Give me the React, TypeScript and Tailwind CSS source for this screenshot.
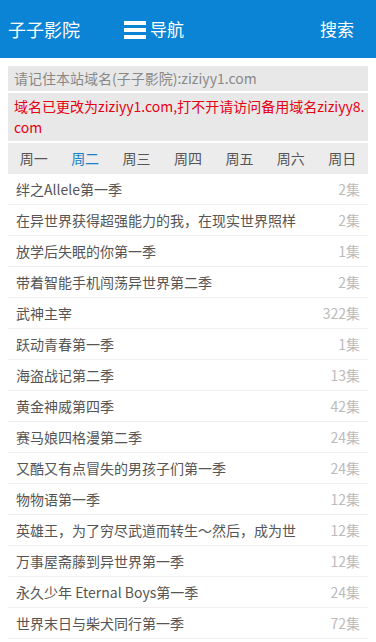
const days = ['周一', '周二', '周三', '周四', '周五', '周六', '周日']

const shows: { title: string; count: string }[] = [
  { title: '绊之Allele第一季', count: '2集' },
  { title: '在异世界获得超强能力的我，在现实世界照样', count: '2集' },
  { title: '放学后失眠的你第一季', count: '1集' },
  { title: '带着智能手机闯荡异世界第二季', count: '2集' },
  { title: '武神主宰', count: '322集' },
  { title: '跃动青春第一季', count: '1集' },
  { title: '海盗战记第二季', count: '13集' },
  { title: '黄金神威第四季', count: '42集' },
  { title: '赛马娘四格漫第二季', count: '24集' },
  { title: '又酷又有点冒失的男孩子们第一季', count: '24集' },
  { title: '物物语第一季', count: '12集' },
  { title: '英雄王，为了穷尽武道而转生～然后，成为世', count: '12集' },
  { title: '万事屋斋藤到异世界第一季', count: '12集' },
  { title: '永久少年 Eternal Boys第一季', count: '24集' },
  { title: '世界末日与柴犬同行第一季', count: '72集' },
]

const App = () => {
  const active = 1

  return (
    <div className="min-h-[642px] bg-white font-['Noto_Sans_CJK_SC','Noto_Sans',sans-serif]">
      {/* top bar */}
      <header className="flex h-[58px] items-center bg-[#0b84d5] px-2 text-white">
        <div className="w-[116px] text-[18px]">子子影院</div>
        <div className="flex items-center gap-1 text-[17px]">
          <svg width="22" height="20" viewBox="0 0 22 20" className="mt-[1px]">
            <rect x="0" y="1" width="22" height="4" fill="#fff" />
            <rect x="0" y="8" width="22" height="4" fill="#fff" />
            <rect x="0" y="15" width="22" height="4" fill="#fff" />
          </svg>
          <span>导航</span>
        </div>
        <div className="ml-auto mr-[14px] text-[17px]">搜索</div>
      </header>

      <div className="mx-2 mt-2 flex flex-col gap-[2px]">
        <div className="bg-[#e8e8e8] px-[6px] py-[2px] text-[14px] leading-[21px] text-[#888]">
          请记住本站域名(子子影院):ziziyy1.com
        </div>
        <div className="bg-[#e8e8e8] py-[3px] pl-[6px] pr-[1px] text-[14px] leading-[21px] break-all text-[#e60012]">
          域名已更改为ziziyy1.com,打不开请访问备用域名ziziyy8.com
        </div>
        <div className="grid h-[31px] grid-cols-7 items-center bg-[#ececec] text-[14px]">
          {days.map((d, i) => (
            <div key={d} className={`text-center ${i === active ? 'text-[#1a7fc9]' : 'text-[#555]'}`}>
              {d}
            </div>
          ))}
        </div>

        <ul className="-mt-[2px]">
          {shows.map((s) => (
            <li key={s.title} className="flex h-[31px] items-center border-b border-[#efefef] px-2 text-[14px]">
              <span className="whitespace-nowrap text-[#555]">{s.title}</span>
              <span className="ml-auto pl-2 text-[#bbb]">{s.count}</span>
            </li>
          ))}
        </ul>
      </div>
    </div>
  )
}

export default App
